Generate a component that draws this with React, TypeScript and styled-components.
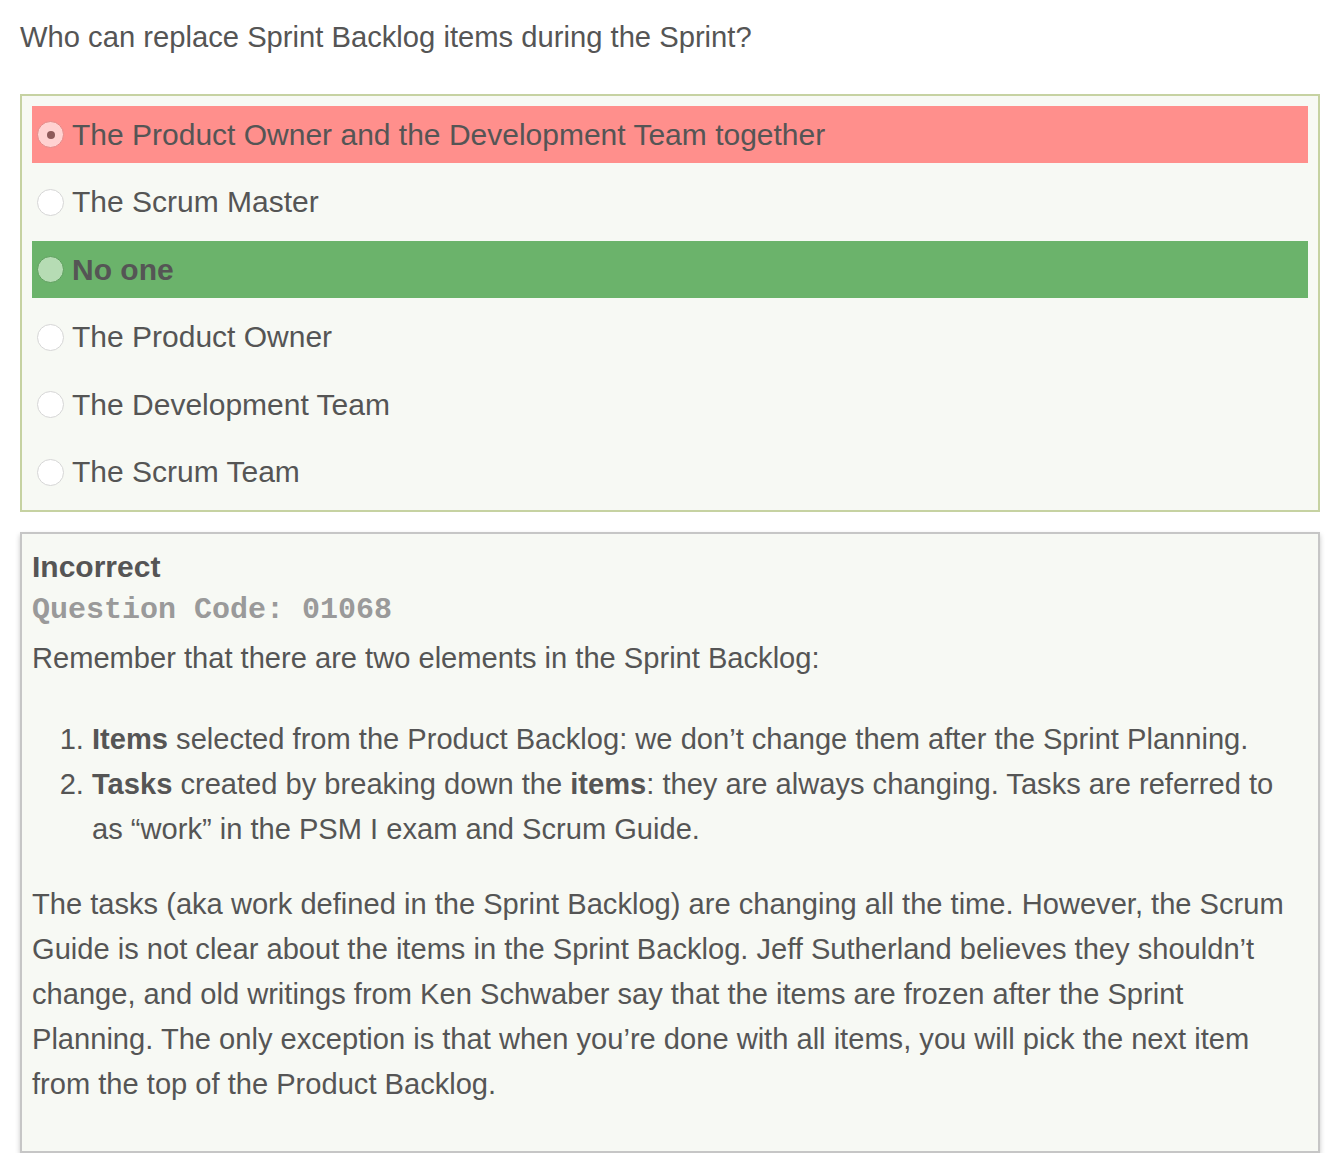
import React from "react";
import styled, { createGlobalStyle, css } from "styled-components";

const Global = createGlobalStyle`
  html, body { margin: 0; padding: 0; background: #ffffff; }
  body { font-family: "Liberation Sans", Arial, sans-serif; color: #555555; }
`;

const Page = styled.div`
  padding: 15px 12px 0 20px;
  width: 1300px;
`;

const Title = styled.h1`
  margin: 0 0 35px 0;
  font-size: 29.2px;
  font-weight: 400;
  line-height: 44px;
  color: #555555;
`;

const Options = styled.div`
  border: 2px solid #c6d2a2;
  background: #f7f9f4;
  padding: 10px 10px 9px 10px;
  display: flex;
  flex-direction: column;
  gap: 10.5px;
`;

type Tone = "wrong" | "right" | "none";

const Row = styled.label<{ $tone: Tone }>`
  display: flex;
  align-items: center;
  gap: 8px;
  height: 57px;
  padding-left: 5px;
  font-size: 30px;
  color: #555555;
  ${(p) =>
    p.$tone === "wrong" &&
    css`
      background: #ff8f8c;
    `}
  ${(p) =>
    p.$tone === "right" &&
    css`
      background: #6bb36b;
      font-weight: 700;
    `}
`;

const Radio = styled.span<{ $tone: Tone; $checked?: boolean }>`
  position: relative;
  flex: none;
  width: 27px;
  height: 27px;
  border-radius: 50%;
  box-sizing: border-box;
  border: 1.5px solid
    ${(p) => (p.$tone === "wrong" ? "#e58a88" : p.$tone === "right" ? "#5e9f5e" : "#d6d6d6")};
  background: ${(p) =>
    p.$tone === "wrong" ? "#ffd2d1" : p.$tone === "right" ? "#b6dcb4" : "#ffffff"};
  ${(p) =>
    p.$checked &&
    css`
      &::after {
        content: "";
        position: absolute;
        left: 50%;
        top: 50%;
        width: 8px;
        height: 8px;
        margin: -4px 0 0 -4px;
        border-radius: 50%;
        background: #8e5a5a;
      }
    `}
`;

const Feedback = styled.div`
  margin-top: 20px;
  border: 2px solid #c6c6c6;
  background: #f7f9f4;
  box-shadow: 0 3px 5px rgba(0, 0, 0, 0.22);
  padding: 10px 10px 44px 10px;
  font-size: 29.1px;
  line-height: 45px;
  color: #555555;
`;

const Verdict = styled.div`
  font-size: 30px;
  font-weight: 700;
  line-height: 45px;
`;

const Code = styled.div`
  font-family: "Liberation Mono", "Courier New", monospace;
  font-size: 30px;
  font-weight: 700;
  color: #9a9a9a;
  line-height: 42px;
`;

const Para = styled.p<{ $gapTop?: number }>`
  margin: ${(p) => p.$gapTop ?? 0}px 0 0 0;
`;

const List = styled.ol`
  margin: 36px 0 0 0;
  padding-left: 60px;
`;

const Item = styled.li`
  padding-left: 0;
`;

const options: { text: string; tone: Tone; checked?: boolean }[] = [
  { text: "The Product Owner and the Development Team together", tone: "wrong", checked: true },
  { text: "The Scrum Master", tone: "none" },
  { text: "No one", tone: "right" },
  { text: "The Product Owner", tone: "none" },
  { text: "The Development Team", tone: "none" },
  { text: "The Scrum Team", tone: "none" },
];

export default function App() {
  return (
    <>
      <Global />
      <Page>
        <Title>Who can replace Sprint Backlog items during the Sprint?</Title>
        <Options>
          {options.map((o) => (
            <Row key={o.text} $tone={o.tone}>
              <Radio $tone={o.tone} $checked={o.checked} />
              {o.text}
            </Row>
          ))}
        </Options>
        <Feedback>
          <Verdict>Incorrect</Verdict>
          <Code>Question Code: 01068</Code>
          <Para $gapTop={5}>Remember that there are two elements in the Sprint Backlog:</Para>
          <List>
            <Item>
              <b>Items</b> selected from the Product Backlog: we don’t change them after the Sprint Planning.
            </Item>
            <Item>
              <b>Tasks</b> created by breaking down the <b>items</b>: they are always changing. Tasks are referred to as “work” in the PSM I exam and Scrum Guide.
            </Item>
          </List>
          <Para $gapTop={30}>
            The tasks (aka work defined in the Sprint Backlog) are changing all the time. However, the Scrum Guide is not clear about the items in the Sprint Backlog. Jeff Sutherland believes they shouldn’t change, and old writings from Ken Schwaber say that the items are frozen after the Sprint Planning. The only exception is that when you’re done with all items, you will pick the next item from the top of the Product Backlog.
          </Para>
        </Feedback>
      </Page>
    </>
  );
}
